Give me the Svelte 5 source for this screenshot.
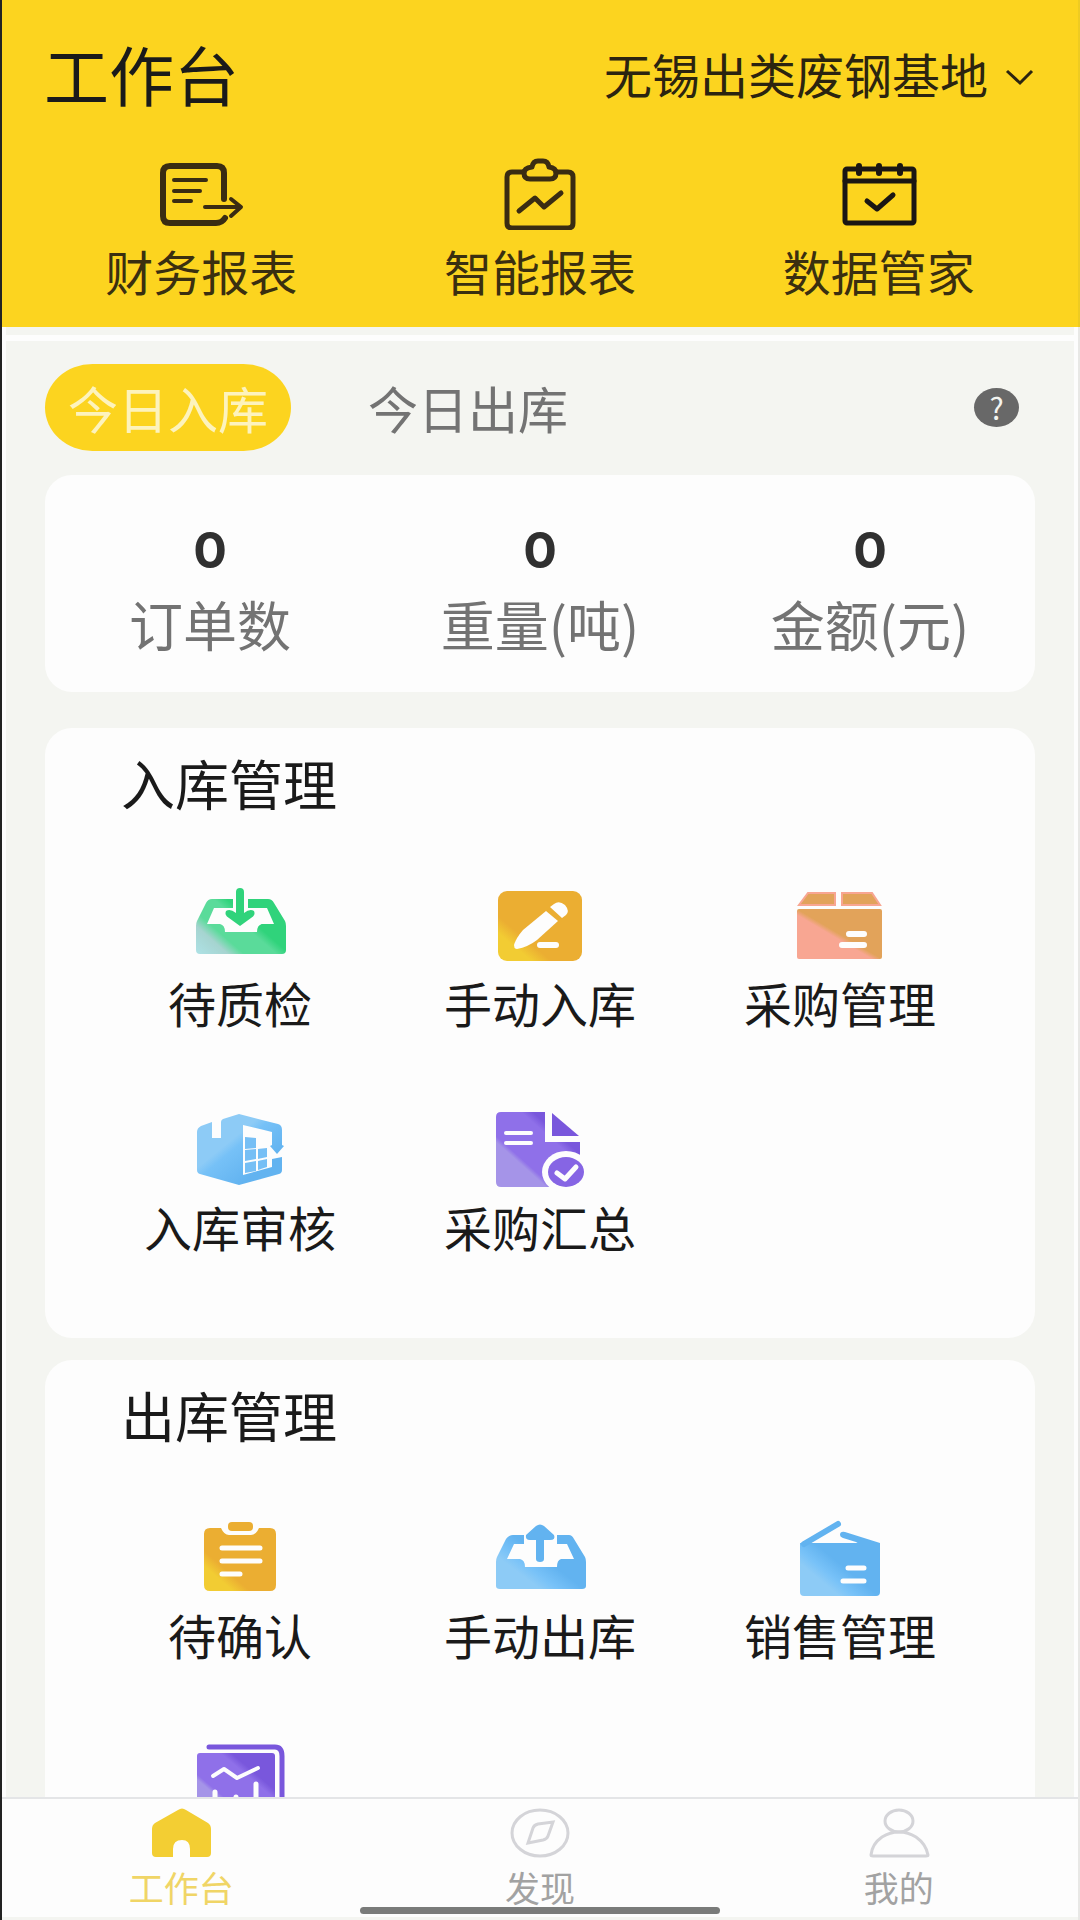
<script lang="ts">
    type Item = { icon: string; label: string; iconOnly?: boolean };

    const reports: Item[] = [
        { icon: "finance", label: "财务报表" },
        { icon: "smart", label: "智能报表" },
        { icon: "data", label: "数据管家" },
    ];

    const tabs = ["今日入库", "今日出库"];

    const stats = [
        { value: 0, label: "订单数" },
        { value: 0, label: "重量(吨)" },
        { value: 0, label: "金额(元)" },
    ];

    const sections: { title: string; items: Item[] }[] = [
        {
            title: "入库管理",
            items: [
                { icon: "tray-in", label: "待质检" },
                { icon: "pencil", label: "手动入库" },
                { icon: "box", label: "采购管理" },
                { icon: "cube", label: "入库审核" },
                { icon: "doc", label: "采购汇总" },
            ],
        },
        {
            title: "出库管理",
            items: [
                { icon: "clipboard", label: "待确认" },
                { icon: "tray-out", label: "手动出库" },
                { icon: "wallet", label: "销售管理" },
                { icon: "chart", label: "销售汇总", iconOnly: true },
            ],
        },
    ];

    const nav: Item[] = [
        { icon: "home", label: "工作台" },
        { icon: "compass", label: "发现" },
        { icon: "user", label: "我的" },
    ];

    let activeTab = $state(0);
    let activeNav = $state(0);
    let branch = $state("无锡出类废钢基地");
</script>

<!-- общие градиенты иконок -->
<svg class="defs" width="0" height="0" aria-hidden="true">
    <defs>
        <linearGradient id="green" x1="0" y1="1" x2="1" y2="0.3">
            <stop offset="0" stop-color="#aee2e6" />
            <stop offset="0.24" stop-color="#a6d4d0" />
            <stop offset="0.36" stop-color="#5adb9a" />
            <stop offset="0.6" stop-color="#5adb9a" />
            <stop offset="0.7" stop-color="#30d37b" />
        </linearGradient>
        <linearGradient id="amber" x1="0" y1="1" x2="1" y2="0">
            <stop offset="0.2" stop-color="#f2cc33" />
            <stop offset="0.32" stop-color="#ebae32" />
        </linearGradient>
        <linearGradient id="orange" x1="0" y1="1" x2="1" y2="0">
            <stop offset="0.44" stop-color="#f8a692" />
            <stop offset="0.5" stop-color="#e2a35a" />
        </linearGradient>
        <linearGradient id="blue" x1="0" y1="1" x2="1" y2="0.2">
            <stop offset="0.3" stop-color="#8dcbf6" />
            <stop offset="0.42" stop-color="#78c2f8" />
            <stop offset="0.6" stop-color="#62b3f0" />
        </linearGradient>
        <linearGradient id="cube" x1="0" y1="0" x2="1" y2="1">
            <stop offset="0.38" stop-color="#8dcbf6" />
            <stop offset="0.46" stop-color="#76c1f7" />
            <stop offset="0.75" stop-color="#62b3f0" />
        </linearGradient>
        <linearGradient id="purple" x1="0" y1="1" x2="1" y2="0">
            <stop offset="0.3" stop-color="#a594e8" />
            <stop offset="0.34" stop-color="#8f70e9" />
            <stop offset="0.65" stop-color="#8f70e9" />
            <stop offset="0.72" stop-color="#7957dc" />
        </linearGradient>
    </defs>
</svg>

{#snippet reportIcon(name: string)}
    <svg class="line-icon" viewBox="0 0 90 72" width="90" height="72" aria-hidden="true">
        {#if name === "finance"}
            <path stroke-width="6" d="M68 41V15Q68 8 61 8H14Q7 8 7 15V58Q7 65 14 65H60Q66 65 69 60" />
            <path stroke-width="4" d="M18 22H50M18 33H44M18 43H35M49 49H84M75 41L85 49L75 58" />
        {:else if name === "smart"}
            <path stroke-width="5" d="M29 14H17Q12 14 12 19V65Q12 70 17 70H73Q78 70 78 65V19Q78 14 73 14H61" />
            <path stroke-width="5" d="M37 9Q38 3 43 3H48Q53 3 54 9Q61 10 61 15Q61 21 55 21H35Q29 21 29 15Q29 10 37 9Z" />
            <path stroke-width="5" d="M24 53L40 40L49 49L66 35" />
        {:else}
            <rect stroke-width="5" x="11" y="11" width="69" height="54" rx="2" />
            <path stroke-width="5" d="M11 23H80M33 43L43 51L59 37" />
            <path stroke-width="6" d="M25 8V15M45 8V15M66 8V15" />
        {/if}
    </svg>
{/snippet}

{#snippet menuIcon(name: string)}
    <svg viewBox="0 0 96 84" width="96" height="84" aria-hidden="true">
        {#if name === "tray-in"}
            <path fill="url(#green)" d="M20 15H76Q80 15 82 19L93 37Q94 39 94 42V66Q94 70 90 70H8Q4 70 4 66V42Q4 39 5 37L14 19Q16 15 20 15Z" />
            <path fill="#fdfdfd" d="M22 24H41V13H56V24H75L82 40H70Q65 41 65 48H33Q33 41 28 40H15Z" />
            <path fill="#30d37b" d="M44 8Q44 4 48 4Q52 4 52 8V29Q58 24 62 27Q64 31 59 34L48 42L37 34Q32 31 34 27Q38 24 44 29Z" />
        {:else if name === "pencil"}
            <rect fill="url(#amber)" x="6" y="7" width="84" height="70" rx="9" />
            <path fill="#fdfdfd" d="M22 61Q24 54 31 46L54 27L66 37L45 56Q36 63 25 65Q22 65 22 61Z" />
            <path fill="#fdfdfd" d="M58 23L62 20Q67 16 73 21Q78 27 74 31L70 34Z" />
            <path class="mark" stroke-width="6" d="M48 61H64" />
        {:else if name === "box"}
            <path fill="#e2a35a" stroke="#f8a692" stroke-width="2" d="M16 9H43V21H7ZM50 9H80L88 21H50Z" />
            <rect fill="url(#orange)" x="5" y="25" width="85" height="50" rx="2" />
            <path class="mark" stroke-width="6" d="M57 50H72M50 61H72" />
        {:else if name === "cube"}
            <path fill="url(#cube)" d="M5 24Q5 20 9 18L20 14V30H29V14Q29 12 31 11L47 6L86 16Q90 17 90 22V37L92 38L85 46L78 38L80 37V24L51 17V67L80 59V51L90 49V62Q90 65 87 66L47 77L8 66Q5 65 5 62Z" />
            <path fill="#76bff5" d="M53 29L64 30V40L53 41ZM53 42L64 41V51L53 53ZM53 55L64 53V63L53 65ZM66 41L75 40V49L66 51ZM66 53L75 51V59L66 62Z" />
        {:else if name === "doc"}
            <path fill="url(#purple)" d="M9 4H53V34H88V79H9Q4 79 4 74V9Q4 4 9 4Z" />
            <path fill="#7957dc" d="M60 5L87 28H60Z" />
            <ellipse fill="#fdfdfd" cx="74" cy="64" rx="24" ry="21" />
            <path fill="#fdfdfd" d="M74 64H90V80H60Z" />
            <ellipse fill="#8665e4" cx="74" cy="64" rx="18" ry="15" />
            <path class="mark" stroke-width="4" d="M14 25H39M14 35H39" />
            <path class="mark" stroke-width="5" d="M65 65L73 71L84 59" />
        {:else if name === "clipboard"}
            <path fill="url(#amber)" d="M18 12H29Q32 19 37 19H59Q64 19 67 12H78Q84 12 84 18V69Q84 75 78 75H18Q12 75 12 69V18Q12 12 18 12Z" />
            <rect fill="#ebae32" x="36" y="6" width="25" height="9" rx="4" />
            <path class="mark" stroke-width="5" d="M30 32H68M30 45H68M30 58H48" />
        {:else if name === "tray-out"}
            <path fill="url(#blue)" d="M21 19H77Q80 19 82 23L93 41Q94 43 94 46V70Q94 73 90 73H8Q4 73 4 70V46Q4 43 5 41L14 23Q17 19 21 19Z" />
            <path fill="#fdfdfd" d="M22 28H32V16H65V28H75L82 43H69Q65 44 65 51H33Q33 44 28 43H15Z" />
            <path fill="#62b3f0" d="M44 43Q44 46 48 46Q52 46 52 43V24H58Q64 24 62 19L52 10Q48 7 44 10L34 19Q33 24 38 24H44Z" />
        {:else if name === "wallet"}
            <path fill="url(#blue)" d="M8 27H88V76Q88 80 84 80H12Q8 80 8 76Z" />
            <path fill="none" stroke="#62b3f0" stroke-width="6" stroke-linecap="round" d="M12 28L46 8" />
            <path fill="#62b3f0" d="M48 19Q48 15 53 16L88 27V31H72L64 26L51 22Q48 21 48 19Z" />
            <path class="mark" stroke-width="5" d="M56 52H72M51 65H72" />
        {:else}
            <path fill="none" stroke="#7957dc" stroke-width="5" stroke-linecap="round" d="M17 7H83Q90 7 90 16V78" />
            <rect fill="url(#purple)" x="5" y="13" width="78" height="66" rx="3" />
            <path class="mark" stroke-width="4" d="M21 36L32 29L45 38L66 28" />
            <path class="mark" stroke-width="5" d="M23 52V68M44 57V68M64 44V68" />
        {/if}
    </svg>
{/snippet}

{#snippet navIcon(name: string)}
    <svg viewBox="0 0 64 56" width="64" height="56" aria-hidden="true">
        {#if name === "home"}
            <path fill="#f3ce33" d="M29 5Q33 2 37 5L59 18Q62 20 62 24V48Q62 52 58 52H41V44Q41 35 33 35Q24 35 24 44V52H7Q3 52 3 48V24Q3 20 6 18Z" />
        {:else if name === "compass"}
            <ellipse cx="32" cy="28" rx="28" ry="23" />
            <path d="M20 38L25 23Q26 20 30 19L45 17L40 31Q39 34 35 35Z" />
        {:else}
            <ellipse cx="32" cy="16" rx="14" ry="11" />
            <path d="M4 50Q5 39 15 32Q23 27 32 27Q41 27 49 32Q59 39 61 50Q61 51 59 51H6Q4 51 4 50Z" />
        {/if}
    </svg>
{/snippet}

<div class="app">
    <header>
        <div class="top">
            <h1>工作台</h1>
            <div class="branch">
                <select aria-label="基地" bind:value={branch}>
                    <option>无锡出类废钢基地</option>
                </select>
                <svg viewBox="0 0 32 20" width="32" height="20" aria-hidden="true">
                    <path d="M4 4L17 16L29 4" />
                </svg>
            </div>
        </div>
        <div class="reports">
            {#each reports as item}
                <button type="button">
                    {@render reportIcon(item.icon)}
                    <span>{item.label}</span>
                </button>
            {/each}
        </div>
    </header>

    <main>
        <div class="strip"></div>

        <div class="tabs">
            {#each tabs as tab, i}
                <button type="button" class:active={activeTab === i} onclick={() => (activeTab = i)}>
                    {tab}
                </button>
            {/each}
            <button type="button" class="help" aria-label="说明">?</button>
        </div>

        <section class="card stats">
            {#each stats as stat}
                <div class="stat">
                    <strong>{stat.value}</strong>
                    <span>{stat.label}</span>
                </div>
            {/each}
        </section>

        {#each sections as section}
            <section class="card menu">
                <h2>{section.title}</h2>
                <div class="grid">
                    {#each section.items as item}
                        <button type="button" aria-label={item.label}>
                            {@render menuIcon(item.icon)}
                            {#if !item.iconOnly}
                                <span>{item.label}</span>
                            {/if}
                        </button>
                    {/each}
                </div>
            </section>
        {/each}
    </main>

    <nav>
        {#each nav as item, i}
            <button type="button" class:active={activeNav === i} onclick={() => (activeNav = i)}>
                {@render navIcon(item.icon)}
                <span>{item.label}</span>
            </button>
        {/each}
        <div class="indicator"></div>
    </nav>
</div>

<style>
    :global(body) {
        margin: 0;
        background: #f4f5f1;
    }

    .defs {
        position: absolute;
    }

    .app {
        box-sizing: border-box;
        height: 100vh;
        display: flex;
        flex-direction: column;
        border-left: 2px solid #222;
        border-right: 2px solid #e8e8e6;
        font-family: "Noto Sans CJK SC", sans-serif;
        color: #1a1a1a;
    }

    button,
    select {
        margin: 0;
        padding: 0;
        border: 0;
        background: none;
        font: inherit;
        color: inherit;
        cursor: pointer;
    }

    h1,
    h2 {
        margin: 0;
        font-weight: 400;
    }

    svg {
        display: block;
    }

    header {
        flex: none;
        margin-right: -2px;
        padding: 37px 0 25px;
        border-right: 2px solid #eecb22;
        background: #fcd41f;
    }

    .top {
        display: flex;
        align-items: center;
        justify-content: space-between;
        padding: 0 43px 0 42px;
    }

    h1 {
        font-size: 65px;
        line-height: 72px;
    }

    .branch {
        position: relative;
    }

    .branch select {
        appearance: none;
        padding-right: 46px;
        font-size: 48px;
        line-height: 72px;
        color: #2b2410;
    }

    /* стрелка поверх select, клики пропускаем */
    .branch svg {
        position: absolute;
        right: 0;
        top: 30px;
        fill: none;
        stroke: #2b2410;
        stroke-width: 3;
        pointer-events: none;
    }

    .reports {
        display: grid;
        grid-template-columns: repeat(3, 1fr);
        margin-top: 49px;
        padding: 0 30px;
    }

    .reports button {
        display: flex;
        flex-direction: column;
        align-items: center;
        gap: 8px;
        font-size: 48px;
        line-height: 64px;
        color: #3a2f10;
    }

    .line-icon {
        fill: none;
        stroke: #3a2c12;
        stroke-linecap: round;
        stroke-linejoin: round;
    }

    .reports button:last-child .line-icon {
        stroke: #1a1613;
    }

    main {
        flex: 1;
        min-height: 0;
        overflow-y: auto;
        scrollbar-width: none;
        padding: 0 39px;
        border: solid #fdfdfd;
        border-width: 0 4px;
        background: #f4f5f1;
    }

    .strip {
        height: 6px;
        margin: 8px -39px 0;
        background: #fdfdfd;
    }

    .tabs {
        display: flex;
        align-items: center;
        margin: 23px 0 24px;
    }

    .tabs button {
        padding: 0 23px;
        border-radius: 48px / 44px;
        font-size: 50px;
        line-height: 87px;
        color: #737373;
    }

    .tabs button + button {
        margin-left: 54px;
    }

    .tabs .active {
        background: #fcd41f;
        color: #fdf3bd;
    }

    .tabs .help {
        width: 45px;
        height: 39px;
        margin-left: auto;
        margin-right: 16px;
        padding: 0;
        border-radius: 50%;
        background: #686868;
        font-size: 30px;
        line-height: 39px;
        color: #f4f5f1;
    }

    .card {
        border-radius: 27px;
        background: #fdfdfd;
    }

    .stats {
        display: grid;
        grid-template-columns: repeat(3, 1fr);
        padding: 43px 0 36px;
    }

    .stat {
        display: flex;
        flex-direction: column;
        align-items: center;
        gap: 10px;
        font-size: 54px;
        line-height: 64px;
        color: #737373;
    }

    .stat strong {
        font-family: Inter, sans-serif;
        font-size: 50px;
        font-weight: 700;
        color: #303030;
    }

    .menu {
        margin-top: 22px;
        padding: 23px 45px 84px;
    }

    .stats + .menu {
        margin-top: 36px;
    }

    h2 {
        padding-left: 31px;
        font-size: 54px;
        line-height: 64px;
    }

    .grid {
        display: grid;
        grid-template-columns: repeat(3, 1fr);
        row-gap: 78px;
        margin-top: 69px;
    }

    .grid button {
        display: flex;
        flex-direction: column;
        align-items: center;
        gap: 6px;
        font-size: 48px;
        line-height: 56px;
    }

    .mark {
        fill: none;
        stroke: #fdfdfd;
        stroke-linecap: round;
        stroke-linejoin: round;
    }

    nav {
        position: relative;
        flex: none;
        display: grid;
        grid-template-columns: repeat(3, 1fr);
        padding: 6px 0 8px;
        border-top: 2px solid #e4e5e7;
        border-bottom: 3px solid #f4f5f1;
        background: #fdfdfd;
    }

    nav button {
        display: flex;
        flex-direction: column;
        align-items: center;
        gap: 4px;
        font-size: 35px;
        line-height: 44px;
        color: #a2a2a2;
    }

    nav button.active {
        color: #f0d566;
    }

    nav ellipse,
    nav path:not([fill]) {
        fill: none;
        stroke: #d4d4d8;
        stroke-width: 3;
    }

    .indicator {
        position: absolute;
        left: 50%;
        bottom: 3px;
        width: 360px;
        height: 7px;
        margin-left: -180px;
        border-radius: 4px;
        background: #7a7b7a;
    }
</style>
